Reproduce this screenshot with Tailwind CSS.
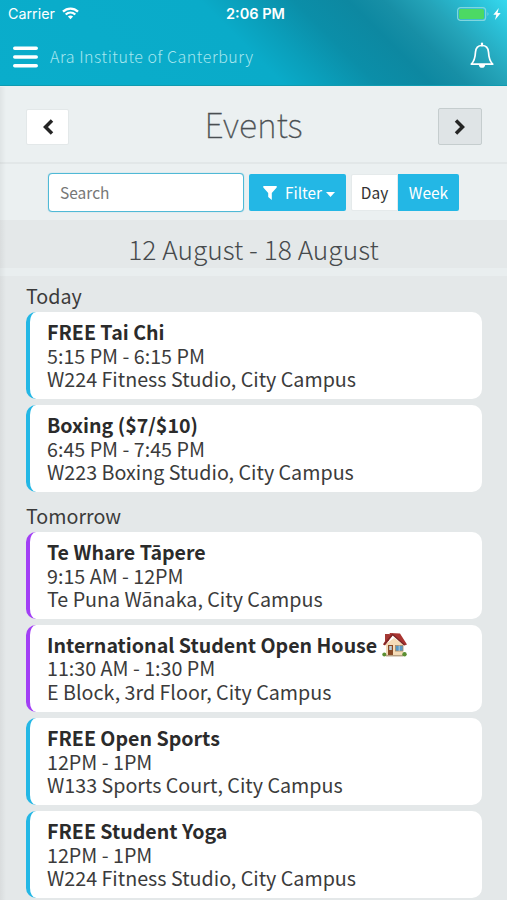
<!DOCTYPE html>
<html lang="en">
<head>
<meta charset="utf-8">
<title>Events</title>
<script src="https://cdn.jsdelivr.net/npm/@tailwindcss/browser@4"></script>
</head>
<body class="w-[507px] h-[900px] overflow-hidden bg-[#e4e8e9] text-[#3b3b3b] font-['Noto_Sans_CJK_SC','Noto_Sans',sans-serif]">
<div class="relative h-[900px] overflow-hidden">
  <div class="absolute z-10 left-0 top-[87px] bottom-0 w-[6px] bg-linear-to-r from-black/5 to-transparent"></div>
  <header class="h-[86px] border-b border-[#0f9bb0] bg-[#0aabc9] bg-[linear-gradient(45deg,#0aadcb_0%,#0aabc9_48%,#0a9fbb_55%,#0b8ea8_64%,#0d88a1_73%,#178fa6_79%,#24a3b8_86%,#2bc0d7_94%,#36d9ef_100%)]">
    <div class="h-[28px] grid grid-cols-3 items-center pl-[8px] pr-[6px] text-white font-['Inter','Liberation_Sans',sans-serif]">
      <div class="flex items-center gap-[7px]">
        <span class="text-[14.300px] leading-none w-[47px] whitespace-nowrap">Carrier</span>
        <svg class="w-[17px] h-[13px] -mt-[1px]" viewBox="0 0 17 13" fill="none" stroke="white" stroke-width="2.3"><path d="M1 4.6C5.2.5 11.800.5 16 4.600"/><path d="M3.700 7.500C6.500 4.900 10.500 4.900 13.300 7.500"/><path d="M5.900 9.600C7.500 8.200 9.500 8.200 11.100 9.600L8.500 12.300Z" fill="white" stroke="none"/></svg>
      </div>
      <div class="text-center text-[14.500px] leading-none font-semibold whitespace-nowrap pl-[2px]">2:06 PM</div>
      <div class="flex items-center justify-end gap-[3px]">
        <svg class="w-[33px] h-[14px] -mt-[1px]" viewBox="0 0 33 14"><rect x=".6" y=".6" width="28" height="12.800" rx="3" fill="none" stroke="#80d6df" stroke-width="1.200"/><rect x="2" y="2" width="25" height="10" rx="1.500" fill="#4cd964"/><path d="M30.500 5q2 2 0 4z" fill="#80d6df"/></svg>
        <svg class="w-[8px] h-[12px] -mt-[1px]" viewBox="0 0 8 12"><path d="M5.800 0 .3 6.700H3.300L2 12 7.700 5H4.500Z" fill="white"/></svg>
      </div>
    </div>
    <div class="h-[57px] flex items-center pl-[13px] pr-[12px]">
      <svg class="w-[25px] h-[22px]" viewBox="0 0 25 22" stroke="white" stroke-width="3.600" stroke-linecap="round"><path d="M1.800 2.200H23.200M1.800 11H23.200M1.800 19.800H23.200"/></svg>
      <span class="ml-[12px] -mt-[2px] text-[16px] leading-none font-light tracking-[0.530px] text-[#a5e6ef] whitespace-nowrap">Ara Institute of Canterbury</span>
      <svg class="ml-auto -mt-[2px] w-[26px] h-[28px]" viewBox="0 0 26 28" fill="none" stroke="white" stroke-width="1.700" stroke-linejoin="round"><path d="M13 3.500C9 3.500 6.800 6.200 6.500 10C6.200 16 5.500 19 2.300 22.200H23.700C20.500 19 19.800 16 19.500 10C19.200 6.200 17 3.500 13 3.500Z"/><path d="M13 1.500V3.500" stroke-linecap="round" stroke-width="2.200"/><path d="M9.800 23a3.300 3.800 0 0 0 6.400 0z" fill="white" stroke="none"/></svg>
    </div>
  </header>
  <div class="h-[78px] bg-[#ebf0f1] border-b-2 border-[#e2e7e8] flex items-center justify-between pl-[26px] pr-[25px] pt-[5px]">
    <button class="w-[43px] h-[36px] bg-white border border-[#e3e8e9] rounded-[2px] flex items-center justify-center"><svg class="w-[12px] h-[16px]" viewBox="0 0 12 16" fill="none" stroke="#252525" stroke-width="3.500"><path d="M10 1.500 3.500 8 10 14.500"/></svg></button>
    <h1 class="-mt-[5px] text-[34px] leading-none font-thin [-webkit-text-stroke:0.300px_#4a4f52] text-[#4a4f52] whitespace-nowrap">Events</h1>
    <button class="w-[44px] h-[37px] bg-[#dfe4e6] border border-[#c5cdce] rounded-[2px] flex items-center justify-center"><svg class="w-[12px] h-[16px]" viewBox="0 0 12 16" fill="none" stroke="#252525" stroke-width="3.500"><path d="M2 1.500 8.500 8 2 14.500"/></svg></button>
  </div>
  <div class="h-[56px] bg-[#ebf0f1] flex items-center pl-[48px] text-[15.500px] leading-none">
    <div class="w-[196px] h-[39px] bg-white border border-[#4fb9d6] shadow-[0_0_1px_#66bfd8] rounded-[4px] flex items-center pl-[11px] pt-[2px] text-[#777]">Search</div>
    <div class="ml-[5px] w-[97px] h-[37px] bg-[#23b7e5] rounded-[2px] flex items-center pl-[14px] pt-[1px] text-white">
      <svg class="w-[14px] h-[14px]" viewBox="0 0 14 14" fill="white"><path d="M.3 0H13.700V1.500L8.800 7V14L5.200 11V7L.3 1.500Z"/></svg>
      <span class="ml-[8px] pt-[1px] text-[15.300px]">Filter</span>
      <svg class="ml-[4px] mt-[3px] w-[9px] h-[5px]" viewBox="0 0 9 5" fill="white"><path d="M0 0H9L4.500 5Z"/></svg>
    </div>
    <div class="ml-[5px] w-[47px] h-[37px] bg-white border border-[#e5eaeb] rounded-l-[2px] flex items-center justify-center pt-[2px] text-[#333]">Day</div>
    <div class="w-[61px] h-[37px] bg-[#23b7e5] rounded-r-[2px] flex items-center justify-center pt-[2px] text-white">Week</div>
  </div>
  <div class="h-[48px] flex items-center justify-center pt-[10px] text-[26.300px] leading-none font-light text-[#474b4d] whitespace-nowrap">12 August - 18 August</div>
  <div class="h-[8px] bg-[#e9eeef]"></div>
  <main class="pl-[26px] pr-[25px] text-[19.700px] leading-[23.200px] whitespace-nowrap">
    <h2 class="h-[36px] pt-[8px]">Today</h2>
    <section class="flex flex-col gap-[6px]">
      <article class="h-[87px] bg-white rounded-[10px] border-l-4 border-[#23b7e5] pl-[17px] pt-[8.300px]"><h3 class="font-bold text-[19.600px] text-[#2b2b2b]">FREE Tai Chi</h3><p>5:15 PM - 6:15 PM</p><p>W224 Fitness Studio, City Campus</p></article>
      <article class="h-[87px] bg-white rounded-[10px] border-l-4 border-[#23b7e5] pl-[17px] pt-[8.300px]"><h3 class="font-bold text-[19.600px] text-[#2b2b2b]">Boxing ($7/$10)</h3><p>6:45 PM - 7:45 PM</p><p>W223 Boxing Studio, City Campus</p></article>
    </section>
    <h2 class="h-[40px] pt-[12px]">Tomorrow</h2>
    <section class="flex flex-col gap-[6px]">
      <article class="h-[87px] bg-white rounded-[10px] border-l-4 border-[#a23ff5] pl-[17px] pt-[8.300px]"><h3 class="font-bold text-[19.600px] text-[#2b2b2b]">Te Whare Tāpere</h3><p>9:15 AM - 12PM</p><p>Te Puna Wānaka, City Campus</p></article>
      <article class="h-[87px] bg-white rounded-[10px] border-l-4 border-[#a23ff5] pl-[17px] pt-[8.300px]"><h3 class="h-[23.200px] font-bold text-[19.600px] text-[#2b2b2b] flex">International Student Open House
        <svg class="ml-[5px] -mt-[1px] w-[25px] h-[26px]" viewBox="0 0 25 26"><path d="M4 12 12 6 21 12V24H4Z" fill="#f5dcb8"/><path d="M3 2H7V9H3Z" fill="#a33a35"/><path d="M8 1 18 1.500 25 12.500 22.500 13.500 11 3 3 13.500 1 12.500Z" fill="#a93431"/><path d="M2 12.500 10.500 2.500 22.500 13" fill="none" stroke="#7c2928" stroke-width="1.300"/><rect x="6" y="13" width="5" height="11" fill="#8a4a26"/><rect x="7.200" y="14" width="2.600" height="4" fill="#b9cdd8"/><rect x="13.500" y="13.500" width="7.500" height="5.500" fill="#579ac6" stroke="#a98b66" stroke-width=".8"/><path d="M17.200 13.500V19" stroke="#d8e4e8" stroke-width=".7"/><path d="M4 23.700H21" stroke="#b7a184" stroke-width="1.500"/><circle cx="2.300" cy="22.500" r="2" fill="#5b8f32"/><circle cx="22.500" cy="22.300" r="2.200" fill="#5b8f32"/></svg></h3><p>11:30 AM - 1:30 PM</p><p>E Block, 3rd Floor, City Campus</p></article>
      <article class="h-[87px] bg-white rounded-[10px] border-l-4 border-[#23b7e5] pl-[17px] pt-[8.300px]"><h3 class="font-bold text-[19.600px] text-[#2b2b2b]">FREE Open Sports</h3><p>12PM - 1PM</p><p>W133 Sports Court, City Campus</p></article>
      <article class="h-[87px] bg-white rounded-[10px] border-l-4 border-[#23b7e5] pl-[17px] pt-[8.300px]"><h3 class="font-bold text-[19.600px] text-[#2b2b2b]">FREE Student Yoga</h3><p>12PM - 1PM</p><p>W224 Fitness Studio, City Campus</p></article>
    </section>
  </main>
</div>
</body>
</html>
